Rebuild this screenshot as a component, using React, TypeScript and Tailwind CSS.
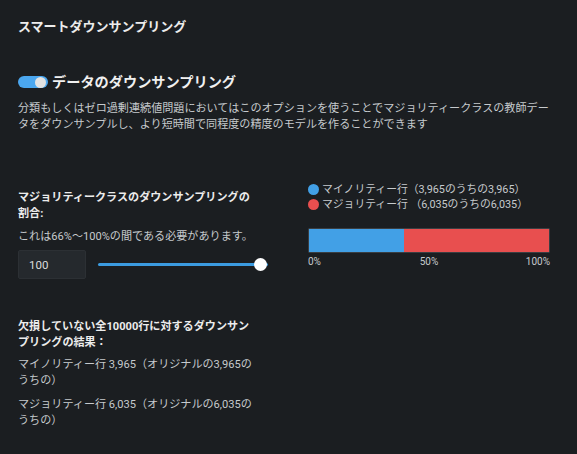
import React from "react";

const minority = 3965;
const majority = 6035;
const total = minority + majority;

const Toggle = () => (
  <div className="relative h-[12px] w-[30px] rounded-full bg-[#4ba7ef]">
    <div className="absolute right-[2px] top-[0.5px] h-[11px] w-[11px] rounded-full bg-[#e2e2e2]" />
  </div>
);

export default function App() {
  const minorityPct = (minority / total) * 100;

  return (
    <div className="min-h-[454px] w-[577px] bg-[#1b1e21] px-[18px] pt-[18px] font-['Roboto','Noto_Sans_CJK_JP',sans-serif] text-[11.1px] leading-[16px] text-[#c6cacd]">
      {/* Header */}
      <h1 className="text-[13px] font-bold leading-[18px] text-[#ececec]">
        スマートダウンサンプリング
      </h1>

      <div className="mt-[36px] flex h-[20px] items-center gap-[4px]">
        <Toggle />
        <span className="text-[14.2px] font-bold text-[#f0f0f0]">
          データのダウンサンプリング
        </span>
      </div>

      <p className="mt-[9px] w-[532px] leading-[15.5px]">
        分類もしくはゼロ過剰連続値問題においてはこのオプションを使うことでマジョリティークラスの教師データをダウンサンプルし、より短時間で同程度の精度のモデルを作ることができます
      </p>

      <div className="mt-[49px] grid grid-cols-[240px_242px] gap-x-[50px]">
        {/* Left column */}
        <div className="pt-[9px]">
          <div className="font-bold text-[#ececec]">
            マジョリティークラスのダウンサンプリングの割合:
          </div>
          <div className="mt-[7px]">これは66%～100%の間である必要があります。</div>
          <div className="mt-[5px] flex w-[250px] items-center gap-[12px]">
            <div className="flex h-[29px] w-[68px] items-center rounded-[2px] border border-[#2c3034] bg-[#25292d] px-[10px] text-[11.5px] text-[#dcdcdc]">
              100
            </div>
            <div className="relative flex h-[14px] flex-1 items-center">
              <div className="h-[3px] w-full rounded-full bg-[#3b9be0]" />
              <div className="absolute right-[1px] h-[13px] w-[13px] rounded-full bg-white" />
            </div>
          </div>

          <div className="mt-[40px] font-bold text-[#ececec]">
            欠損していない全10000行に対するダウンサンプリングの結果：
          </div>
          <p className="mt-[6px]">
            マイノリティー行 3,965（オリジナルの3,965のうちの）
          </p>
          <p className="mt-[8px]">
            マジョリティー行 6,035（オリジナルの6,035のうちの）
          </p>
        </div>

        {/* Right column */}
        <div className="pt-[1px]">
          <div className="flex flex-col">
            <div className="flex h-[15px] items-center gap-[3px]">
              <span className="h-[11px] w-[11px] rounded-full bg-[#42a0e6]" />
              <span className="text-[10.8px]">マイノリティー行（3,965のうちの3,965）</span>
            </div>
            <div className="flex h-[15px] items-center gap-[3px]">
              <span className="h-[11px] w-[11px] rounded-full bg-[#e84f4f]" />
              <span className="text-[10.8px]">マジョリティー行 （6,035のうちの6,035）</span>
            </div>
          </div>

          <div className="mt-[16px] flex h-[25px] w-[242px] overflow-hidden rounded-[1px] border border-[#3a3e42]">
            <div className="h-full bg-[#42a0e6]" style={{ width: `${minorityPct}%` }} />
            <div className="h-full flex-1 bg-[#e84f4f]" />
          </div>
          <div className="mt-[2px] grid w-[242px] grid-cols-3 text-[10px] leading-[14px]">
            <span className="text-left">0%</span>
            <span className="text-center">50%</span>
            <span className="text-right">100%</span>
          </div>
        </div>
      </div>
    </div>
  );
}
